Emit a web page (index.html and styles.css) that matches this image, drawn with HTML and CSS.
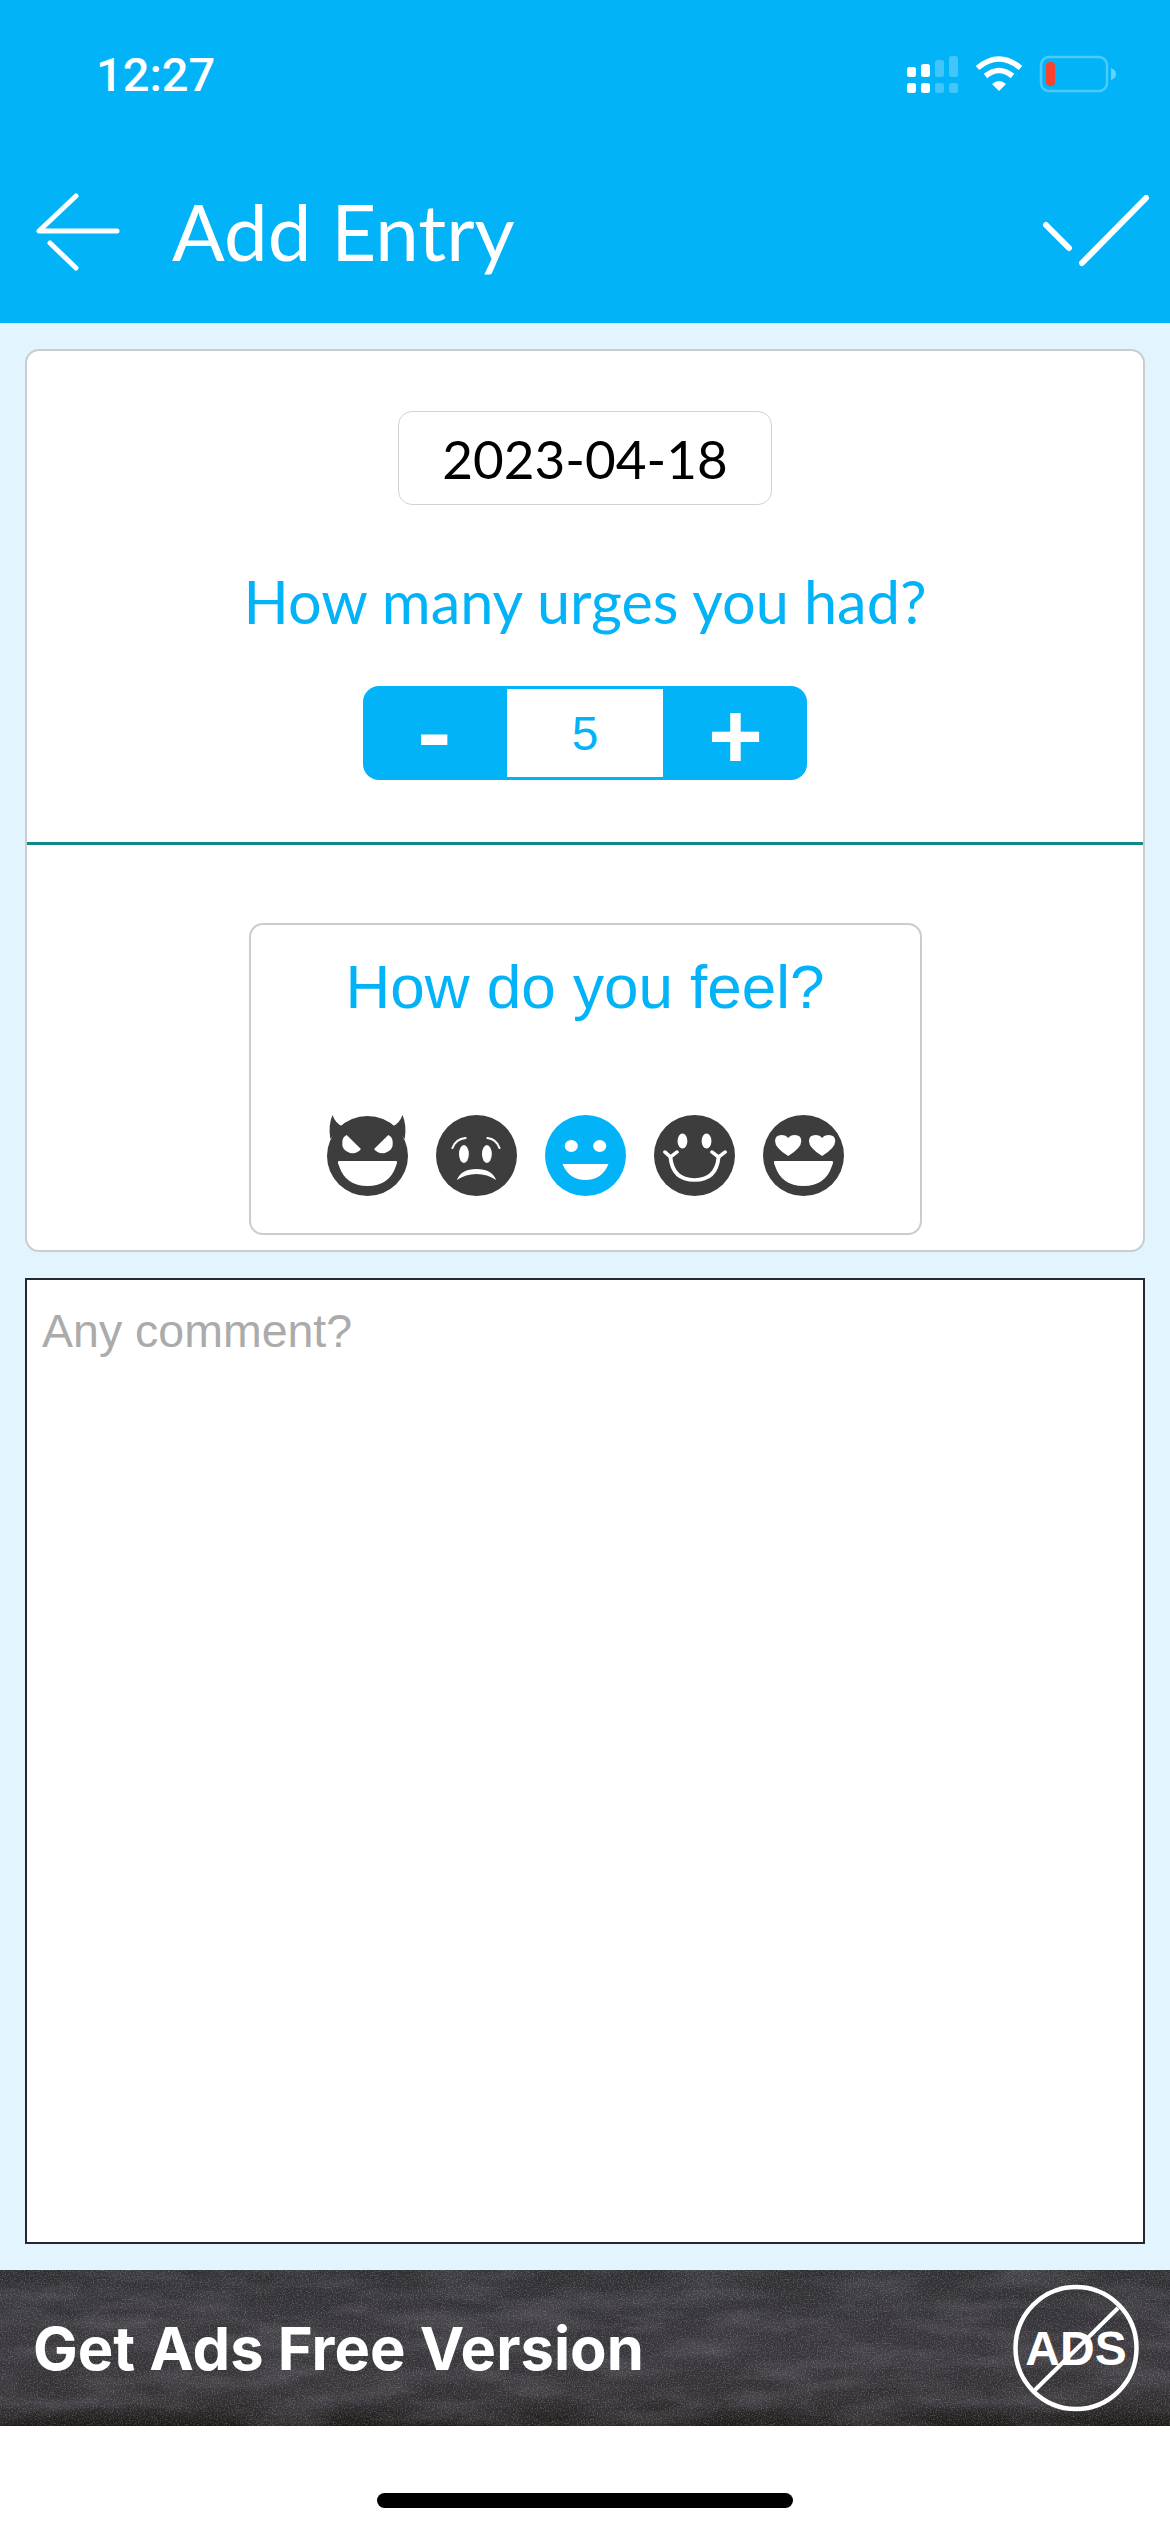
FILE: index.html
```html
<!DOCTYPE html>
<html lang="en">
  <head>
    <meta charset="UTF-8" />
    <title>Add Entry</title>
    <link rel="stylesheet" href="styles.css">
  </head>
  <body>
    <div id="app">
      <header class="header">
        <div class="status-bar">
          <span class="time">12:27</span>
          <svg class="status-icons" width="215" height="40" viewBox="905 54 215 40">
            <g fill="#fff">
              <rect x="907" y="67" width="9" height="10" rx="2.5" />
              <rect x="921" y="64" width="9" height="13" rx="2.5" />
              <rect x="907" y="83" width="9" height="10" rx="2.5" />
              <rect x="921" y="83" width="9" height="10" rx="2.5" />
            </g>
            <g fill="#fff" opacity="0.25">
              <rect x="935" y="60" width="9" height="17" rx="2.5" />
              <rect x="949" y="56" width="9" height="21" rx="2.5" />
              <rect x="935" y="83" width="9" height="10" rx="2.5" />
              <rect x="949" y="83" width="9" height="10" rx="2.5" />
            </g>
            <g fill="none" stroke="#fff" stroke-width="5.5">
              <path d="M977.500 68 Q999 50 1020.500 68" />
              <path d="M985.500 76 Q999 65 1012.500 76" />
            </g>
            <path d="M992 84 Q999 78 1006 84 L999 91 Z" fill="#fff" />
            <rect x="1041" y="57" width="66" height="34" rx="8" fill="none" stroke="#fff" stroke-opacity="0.3" stroke-width="2.5" />
            <rect x="1046" y="62" width="9" height="24" rx="4" fill="#f8432f" />
            <path d="M1111 68 Q1116 70 1116 74 Q1116 78 1111 80 Z" fill="#fff" fill-opacity="0.4" />
          </svg>
        </div>
        <div class="title-bar">
          <svg class="icon-back" width="90" height="80" viewBox="33 190 90 80">
            <path d="M76 195 L39 230 H117 M50 242 L76 267" fill="none" stroke="#fff" stroke-width="5" stroke-linecap="round" stroke-linejoin="round" />
          </svg>
          <h1 class="title">Add Entry</h1>
          <svg class="icon-check" width="110" height="72" viewBox="1038 195 110 72">
            <path d="M1044 225 L1067 248 M1080 263 L1144 198" fill="none" stroke="#fff" stroke-width="6" stroke-linecap="round" />
          </svg>
        </div>
      </header>

      <main class="content">
        <section class="card">
          <div class="urges">
            <div class="date-box">2023-04-18</div>
            <h2 class="urges-label">How many urges you had?</h2>
            <div class="stepper">
              <div class="stepper-btn stepper-minus">-</div>
              <div class="stepper-value">5</div>
              <div class="stepper-btn stepper-plus">+</div>
            </div>
          </div>
          <div class="feel-wrap">
            <div class="feel-box">
              <h2 class="feel-label">How do you feel?</h2>
              <div class="moods">
                <!-- devil -->
                <svg class="mood" width="81" height="81" viewBox="0 0 74 81" preserveAspectRatio="none">
                  <path d="M5 0 Q1 10 3 24 L14 11 Q8 9 5 0 Z M69 0 Q73 10 71 24 L60 11 Q66 9 69 0 Z" fill="#3d3d3d" />
                  <ellipse cx="37" cy="41" rx="37" ry="40" fill="#3d3d3d" />
                  <path d="M18 20 L31 34 Q28 39 21 38 Q13 35 14 27 Q14 22 18 20 Z M56 20 L43 34 Q46 39 53 38 Q61 35 60 27 Q60 22 56 20 Z" fill="#fff" />
                  <path d="M11 46 H63 Q65 46 63 51 Q57 71 37 71 Q17 71 11 51 Q9 46 11 46 Z" fill="#fff" />
                </svg>
                <!-- sad -->
                <svg class="mood" width="81" height="81" viewBox="0 0 74 81" preserveAspectRatio="none">
                  <ellipse cx="37" cy="40.500" rx="37" ry="40.500" fill="#3d3d3d" />
                  <ellipse cx="25.500" cy="39" rx="4.500" ry="9" fill="#fff" />
                  <ellipse cx="46.500" cy="39" rx="4.500" ry="9" fill="#fff" />
                  <path d="M15 33 Q18 24 27 23 M47 23 Q55 24 58 33" fill="none" stroke="#fff" stroke-width="2" stroke-linecap="round" />
                  <path d="M19 65 Q23 54 37 54 Q51 54 55 65 Q47 59 37 59 Q27 59 19 65 Z" fill="#fff" />
                </svg>
                <!-- happy, selected -->
                <svg class="mood" width="81" height="81" viewBox="0 0 74 81" preserveAspectRatio="none">
                  <ellipse cx="37" cy="40.500" rx="37" ry="40.500" fill="#02b3f7" />
                  <circle cx="24" cy="31" r="6" fill="#fff" />
                  <circle cx="50" cy="31" r="6" fill="#fff" />
                  <path d="M16 49 H58 Q52 65 37 65 Q22 65 16 49 Z" fill="#fff" />
                </svg>
                <!-- smile -->
                <svg class="mood" width="81" height="81" viewBox="0 0 74 81" preserveAspectRatio="none">
                  <ellipse cx="37" cy="40.500" rx="37" ry="40.500" fill="#3d3d3d" />
                  <ellipse cx="26" cy="26" rx="4.500" ry="7.500" fill="#fff" />
                  <ellipse cx="48" cy="26" rx="4.500" ry="7.500" fill="#fff" />
                  <path d="M15 42 Q17 65 37 65 Q57 65 59 42" fill="none" stroke="#fff" stroke-width="3.500" />
                  <path d="M10 37 L15 42 L21 37 M53 37 L59 42 L65 37" fill="none" stroke="#fff" stroke-width="3.500" stroke-linecap="round" />
                </svg>
                <!-- heart eyes -->
                <svg class="mood" width="81" height="81" viewBox="0 0 74 81" preserveAspectRatio="none">
                  <ellipse cx="37" cy="40.500" rx="37" ry="40.500" fill="#3d3d3d" />
                  <path d="M23 41 Q11 33 11 26 Q11 20 17 20 Q21 20 23 23 Q25 20 29 20 Q35 20 35 26 Q35 33 23 41 Z" fill="#fff" />
                  <path d="M54 41 Q42 33 42 26 Q42 20 48 20 Q52 20 54 23 Q56 20 60 20 Q66 20 66 26 Q66 33 54 41 Z" fill="#fff" />
                  <path d="M11 46 H63 Q65 46 63 51 Q57 71 37 71 Q17 71 11 51 Q9 46 11 46 Z" fill="#fff" />
                </svg>
              </div>
            </div>
          </div>
        </section>
        <textarea class="comment" placeholder="Any comment?"></textarea>
      </main>

      <a class="ad-bar">
        <svg class="ad-texture" width="1170" height="156">
          <filter id="chalk-fine" x="0" y="0" width="100%" height="100%">
            <feTurbulence type="fractalNoise" baseFrequency="0.75" numOctaves="2" seed="4" />
            <feColorMatrix values="0 0 0 0 1  0 0 0 0 1  0 0 0 0 1  1.6 0 0 0 -0.72" />
          </filter>
          <filter id="chalk-smear" x="0" y="0" width="100%" height="100%">
            <feTurbulence type="fractalNoise" baseFrequency="0.012 0.05" numOctaves="4" seed="9" />
            <feColorMatrix values="0 0 0 0 0.55  0 0 0 0 0.53  0 0 0 0 0.6  1.1 0 0 0 -0.42" />
          </filter>
          <rect width="1170" height="156" filter="url(#chalk-smear)" opacity="0.3" />
          <rect width="1170" height="156" filter="url(#chalk-fine)" opacity="0.35" />
        </svg>
        <span class="ad-text">Get Ads Free Version</span>
        <svg class="ad-icon" width="126" height="128" viewBox="0 0 126 128">
          <ellipse cx="63" cy="64" rx="60.500" ry="61" fill="none" stroke="#fff" stroke-width="4.500" />
          <text class="ad-icon-text" x="63" y="81" text-anchor="middle">ADS</text>
          <path d="M22 106 L105 24" stroke="#fff" stroke-width="4" />
        </svg>
      </a>

      <div class="home-area">
        <div class="home-indicator"></div>
      </div>
    </div>
  </body>
</html>
```

FILE: styles.css
```css
* {
  box-sizing: border-box;
}

html,
body {
  margin: 0px;
  background-color: white;
}

#app {
  width: 1170px;
  height: 2532px;
  display: flex;
  flex-flow: column;
  overflow: hidden;
  font-family: Lato, sans-serif;
  background-color: #e2f4fe;
}

.header {
  height: 324px;
  color: white;
  background-color: #02b3f7;
}

.status-bar {
  height: 150px;
  display: flex;
  align-items: flex-start;
  justify-content: space-between;
  padding: 47px 50px 0px 96px;
}

.time {
  font-family: Roboto, sans-serif;
  font-size: 47px;
  font-weight: 500;
  line-height: 55px;
}

.status-icons {
  margin-top: 7px;
}

.title-bar {
  display: flex;
  align-items: center;
  padding: 36px 20px 0px 33px;
}

.title {
  flex: 1;
  margin: 0px 0px 0px 49px;
  font-size: 78px;
  font-weight: 400;
  line-height: 90px;
}

.content {
  flex: 1;
  display: flex;
  flex-flow: column;
  gap: 26px;
  padding: 26px 25px;
}

.card {
  height: 903px;
  display: flex;
  flex-flow: column;
  border: 2px solid #c9cdd0;
  border-radius: 14px;
  background-color: white;
}

.urges {
  height: 494px;
  display: flex;
  flex-flow: column;
  align-items: center;
  padding-top: 60px;
  border-bottom: 3px solid #0f8a88;
}

.date-box {
  width: 374px;
  height: 94px;
  display: flex;
  align-items: center;
  justify-content: center;
  font-size: 53px;
  color: black;
  border: 1px solid #d2d2d2;
  border-radius: 14px;
}

.urges-label {
  margin: 61px 0px 0px;
  font-size: 59.400px;
  font-weight: 400;
  line-height: 70px;
  color: #02b3f7;
}

.stepper {
  width: 444px;
  height: 94px;
  display: flex;
  margin-top: 50px;
  border-radius: 16px;
  background-color: #02b3f7;
}

.stepper-btn {
  width: 143px;
  display: flex;
  align-items: center;
  justify-content: center;
  color: white;
  line-height: 80px;
}

.stepper-minus {
  padding-top: 8px;
  font-family: Roboto, sans-serif;
  font-size: 95px;
  font-weight: 700;
}

.stepper-plus {
  padding-top: 6px;
  font-family: "Liberation Sans", sans-serif;
  font-size: 94px;
  font-weight: 700;
}

.stepper-value {
  flex: 1;
  display: flex;
  align-items: center;
  justify-content: center;
  margin: 3px 1px;
  font-family: "Liberation Sans", sans-serif;
  font-size: 48px;
  color: #02b3f7;
  background-color: white;
}

.feel-wrap {
  flex: 1;
  display: flex;
  justify-content: center;
  padding-top: 78px;
}

.feel-box {
  width: 673px;
  height: 312px;
  display: flex;
  flex-flow: column;
  align-items: center;
  border: 2px solid #c9cdd0;
  border-radius: 14px;
}

.feel-label {
  margin: 26px 0px 0px;
  font-family: "Liberation Sans", sans-serif;
  font-size: 62px;
  font-weight: 400;
  line-height: 72px;
  color: #02b3f7;
}

.moods {
  display: flex;
  gap: 28px;
  margin-top: 92px;
}

.comment {
  height: 966px;
  display: block;
  padding: 24px 15px;
  resize: none;
  outline: none;
  font-family: "Liberation Sans", sans-serif;
  font-size: 46.500px;
  border: 2px solid #23292e;
  border-radius: 0px;
  background-color: white;

  &::placeholder {
    color: #ababab;
    opacity: 1;
  }
}

.ad-bar {
  height: 156px;
  position: relative;
  display: flex;
  align-items: center;
  justify-content: space-between;
  padding: 0px 31px 0px 33px;
  overflow: hidden;
  background: linear-gradient(to bottom, #2f2e32 0%, #38363b 50%, #312f32 85%, #1c1816 100%);
}

.ad-texture {
  position: absolute;
  top: 0px;
  left: 0px;
}

.ad-text {
  position: relative;
  font-family: Inter, sans-serif;
  font-size: 59.700px;
  font-weight: 700;
  color: white;
}

.ad-icon {
  position: relative;
}

.ad-icon-text {
  font-family: "Liberation Sans", sans-serif;
  font-size: 48px;
  font-weight: 700;
  fill: white;
}

.home-area {
  height: 106px;
  display: flex;
  justify-content: center;
  padding-top: 67px;
  background-color: white;
}

.home-indicator {
  width: 416px;
  height: 15px;
  border-radius: 8px;
  background-color: black;
}
```
